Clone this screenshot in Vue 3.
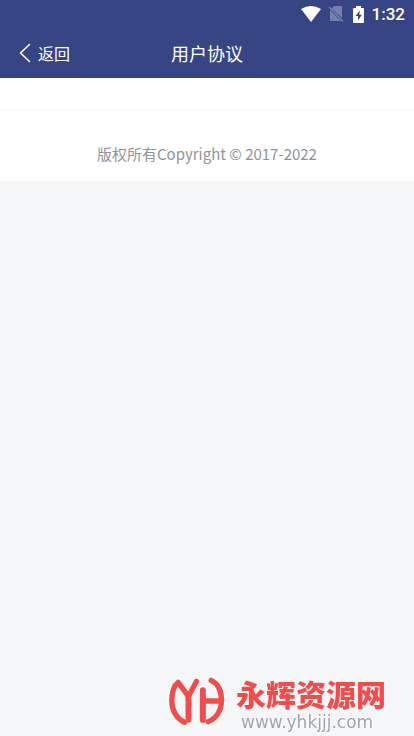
<script setup>
const title = '用户协议'
const back = () => window.history.back()
</script>

<template>
  <div class="page">
    <header class="header">
      <div class="status">
        <svg class="wifi" viewBox="0 0 20 16" aria-hidden="true">
          <path d="M0 3Q10-3 20 3L10 16Z" fill="currentColor" />
        </svg>
        <svg class="sim" viewBox="0 0 16 16" aria-hidden="true">
          <path d="M6 0H13Q14 0 14 1V12L3.5 2.5ZM2 4L13 15H3Q2 15 2 14Z" fill="currentColor" />
          <path d="M1 1L15 15.5" stroke="currentColor" stroke-width="1.4" />
        </svg>
        <svg class="battery" viewBox="0 0 11 17" aria-hidden="true">
          <path fill-rule="evenodd" fill="currentColor" d="M3 0H8V2H10Q11 2 11 3V16Q11 17 10 17H1Q0 17 0 16V3Q0 2 1 2H3ZM6.8 4.5L2.5 10H5V14.5L8.8 8.8H6.3Z" />
        </svg>
        <time class="clock">1:32</time>
      </div>
      <nav class="bar">
        <button class="back" type="button" @click="back">
          <svg class="chevron" viewBox="0 0 12 20" aria-hidden="true">
            <path d="M10.5 1.5L1.5 10L10.5 18.5" fill="none" stroke="currentColor" stroke-width="1.6" stroke-linecap="round" stroke-linejoin="round" />
          </svg>
          <span>返回</span>
        </button>
        <h1 class="title">{{ title }}</h1>
      </nav>
    </header>

    <main class="content"></main>
    <footer class="footer">版权所有Copyright © 2017-2022</footer>

    <aside class="mark">
      <svg class="logo" viewBox="20 14 176 156" aria-hidden="true">
        <g class="halo">
          <path d="M75 157C48 144 32 118 32 91C32 65 42 44 53 34L82 76V149M108 32L82 76M127 58V149M128 92H180M152 28C172 38 184 62 184 90C184 122 166 147 143 155" />
        </g>
        <g class="strokes">
          <path d="M72 156C46 142 34 118 34 91C34 65 42 44 53 36L84 78M108 33L84 78" />
          <path d="M84 74V148" class="stem" />
          <path d="M127 60V149" class="stem" />
          <path d="M128 92H180M152 30C172 40 183 62 183 90C183 122 166 145 143 154" />
        </g>
      </svg>
      <div class="words">
        <strong class="name">永辉资源网</strong>
        <span class="site">www.yhkjjj.com</span>
      </div>
    </aside>
  </div>
</template>

<style>
body {
  margin: 0;
  background: #f4f6f8;
}
</style>

<style scoped>
.page {
  min-height: 100vh;
  font-family: "Noto Sans CJK SC", sans-serif;
}
.header {
  color: #fff;
  background: #384585;
}
.status {
  display: flex;
  align-items: center;
  justify-content: flex-end;
  height: 28px;
  padding: 0 9px;
  box-sizing: border-box;
}
.wifi {
  width: 20px;
  height: 16px;
}
.sim {
  width: 16px;
  height: 16px;
  margin-left: 7px;
  color: #7780ad;
}
.battery {
  width: 11px;
  height: 17px;
  margin-left: 9px;
}
.clock {
  margin-left: 8px;
  font: 500 17px/28px Roboto, sans-serif;
}
.bar {
  display: grid;
  grid-template-columns: 1fr auto 1fr;
  align-items: center;
  height: 50px;
}
.back {
  display: flex;
  align-items: center;
  justify-self: start;
  gap: 7px;
  padding: 0 0 0 19px;
  border: 0;
  background: none;
  color: inherit;
  font: inherit;
  font-size: 16px;
  line-height: 24px;
}
.chevron {
  width: 12px;
  height: 20px;
}
.title {
  margin: 0;
  font-size: 18px;
  font-weight: 400;
  line-height: 28px;
}
.content {
  min-height: 31px;
  background: #fff;
  border-bottom: 1px solid #f4f6f8;
}
.footer {
  padding: 32px 16px 15px;
  background: #fff;
  color: #909399;
  font-size: 15px;
  line-height: 24px;
  text-align: center;
}
.mark {
  position: fixed;
  right: 28px;
  bottom: 5px;
  display: flex;
  align-items: flex-start;
  gap: 10px;
}
.logo {
  width: 59px;
  height: 52px;
}
.halo,
.strokes {
  fill: none;
  stroke: #f54b4b;
  stroke-width: 16;
  stroke-linecap: round;
  stroke-linejoin: round;
}
.halo {
  stroke: #fff;
  stroke-width: 24;
}
.stem {
  stroke-width: 18;
}
.words {
  display: flex;
  flex-direction: column;
  gap: 2px;
}
.name {
  color: #f54b4b;
  font-size: 30px;
  font-weight: 900;
  line-height: 36px;
  text-shadow: 0 0 2px #fff, 0 0 2px #fff;
}
.site {
  padding-left: 5px;
  color: #a5a5a8;
  font-family: "DejaVu Sans", sans-serif;
  font-size: 17px;
  line-height: 18px;
  text-shadow: 0 0 2px #fff, 0 0 2px #fff;
}
</style>
